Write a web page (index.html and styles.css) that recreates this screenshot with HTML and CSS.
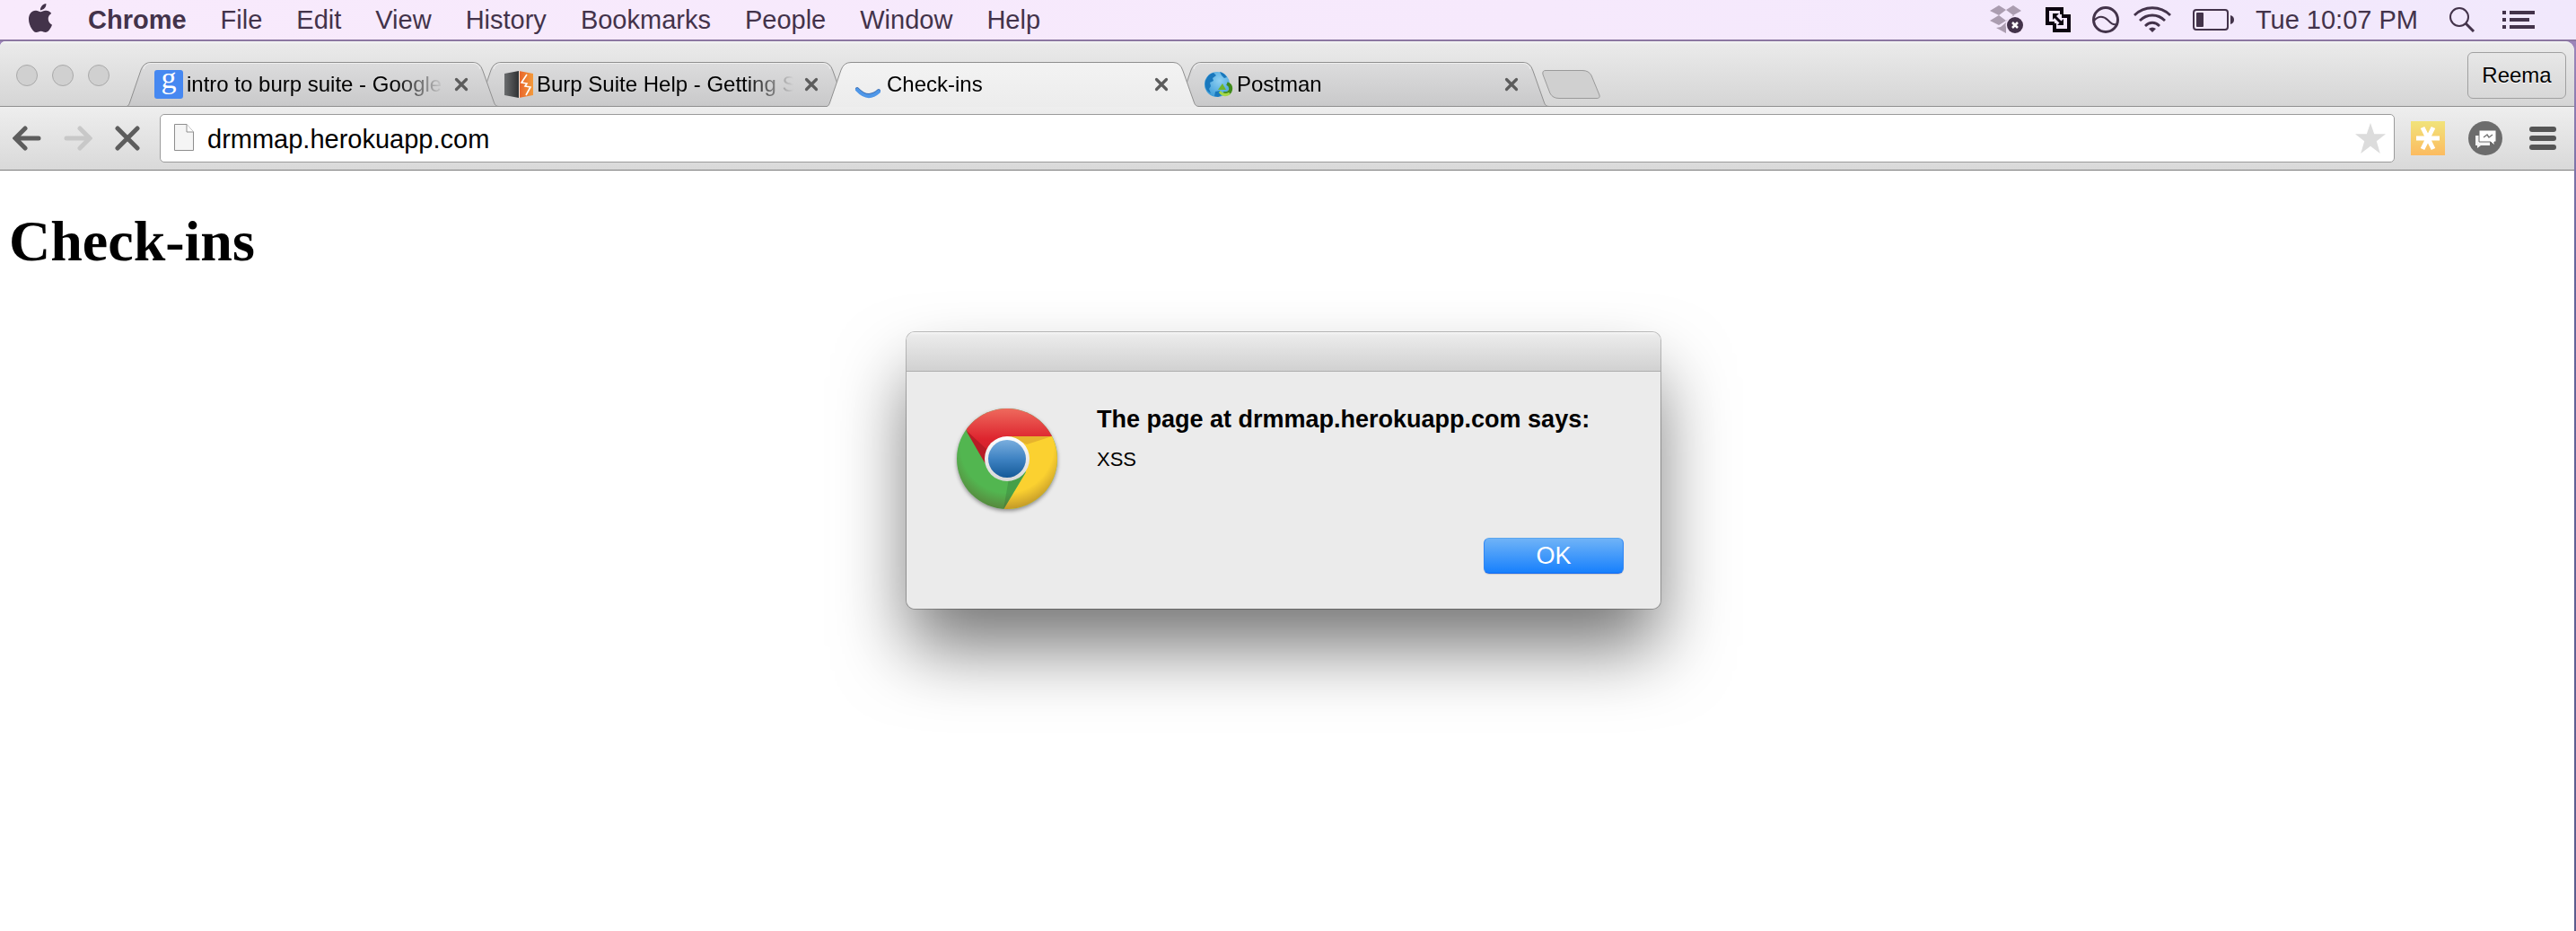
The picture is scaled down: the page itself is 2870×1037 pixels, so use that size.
FILE: index.html
```html
<!DOCTYPE html>
<html lang="en">
<head>
<meta charset="utf-8">
<title>Check-ins</title>
<link rel="stylesheet" href="styles.css">
</head>
<body>
<svg class="defs" width="0" height="0" aria-hidden="true">
  <defs>
    <linearGradient id="tab-idle" x1="0" y1="0" x2="0" y2="1"><stop offset="0" stop-color="#dcdcdd"/><stop offset="1" stop-color="#c9c9ca"/></linearGradient>
    <linearGradient id="tab-live" x1="0" y1="0" x2="0" y2="1"><stop offset="0" stop-color="#f3f3f3"/><stop offset="1" stop-color="#ececec"/></linearGradient>
    <symbol id="close" viewBox="0 0 16 16"><path d="M2.500 2.500l11 11M13.500 2.500l-11 11" stroke="#5c5c5c" stroke-width="3.200" stroke-linecap="round" fill="none"/></symbol>
  </defs>
</svg>

<header class="menubar">
  <nav class="menus" aria-label="Menu bar">
    <button class="menu apple" aria-label="Apple menu"><svg width="32" height="32" viewBox="0 0 24 24" fill="#43334a"><path d="M12.152 6.896c-.948 0-2.415-1.078-3.960-1.040-2.040.027-3.910 1.183-4.961 3.014-2.117 3.675-.546 9.103 1.519 12.090 1.013 1.454 2.208 3.090 3.792 3.039 1.520-.065 2.090-.987 3.935-.987 1.831 0 2.350.987 3.960.948 1.637-.026 2.676-1.480 3.676-2.948 1.156-1.688 1.636-3.325 1.662-3.415-.039-.013-3.182-1.221-3.220-4.857-.026-3.040 2.480-4.494 2.597-4.559-1.429-2.090-3.623-2.324-4.390-2.376-2-.156-3.675 1.090-4.610 1.090zM15.530 3.830c.843-1.012 1.400-2.427 1.245-3.830-1.207.052-2.662.805-3.532 1.818-.780.896-1.454 2.338-1.273 3.714 1.338.104 2.715-.688 3.559-1.701"/></svg></button>
    <button class="menu app">Chrome</button>
    <button class="menu">File</button>
    <button class="menu">Edit</button>
    <button class="menu">View</button>
    <button class="menu">History</button>
    <button class="menu">Bookmarks</button>
    <button class="menu">People</button>
    <button class="menu">Window</button>
    <button class="menu">Help</button>
  </nav>
  <div class="status">
    <svg width="38" height="32" viewBox="0 0 38 32"><g fill="#ab9db0"><path d="M10 0l8 5-8 6-10-5zM26 0l9 6-9 5-8-6zM0 17l10-6 8 6-8 5zM18 17l8-6 9 6-8 5zM7 25l5-1 6-5v12z"/></g><circle cx="28" cy="22" r="10.500" fill="#f5e8fb"/><circle cx="28" cy="22" r="9" fill="#43334a"/><path d="M25 19l6 6M31 19l-6 6" stroke="#fff" stroke-width="2.500"/></svg>
    <svg width="28" height="28" viewBox="0 0 28 28" fill="none" stroke="#0c0410" stroke-width="4"><path d="M10 18H2V2h16v6"/><path d="M18 10h8v16H10v-8"/><path d="M9 9l10 10" stroke-width="3"/><path d="M8 14V7h7zM20 13v7h-7z" fill="#0c0410" stroke="none"/></svg>
    <svg width="30" height="30" viewBox="0 0 30 30" fill="none" stroke="#43334a"><circle cx="15" cy="15" r="13.500" stroke-width="3"/><path d="M2 16c5-6 11-5 15-1s6 6 10 5" stroke-width="2"/></svg>
    <svg class="wifi" width="42" height="30" viewBox="0 0 42 30" fill="none" stroke="#43334a" stroke-width="2.800"><path d="M1 10C12-1 30-1 41 10M7 16c8-8 20-8 28 0M13 22c5-5 11-5 16 0"/><path d="M21 29l-4-4q4-3 8 0z" fill="#43334a" stroke="none"/></svg>
    <svg width="46" height="24" viewBox="0 0 46 24"><rect x="1" y="1" width="38" height="22" rx="3" fill="none" stroke="#43334a" stroke-width="2"/><rect x="4" y="4" width="8" height="16" rx="1" fill="#43334a"/><path d="M42 7q4 1 4 5t-4 5z" fill="#43334a"/></svg>
    <time class="clock">Tue 10:07 PM</time>
    <svg class="search" width="30" height="28" viewBox="0 0 30 28" fill="none" stroke="#43334a"><circle cx="12" cy="11" r="10" stroke-width="2"/><path d="M19 18l9 9" stroke-width="3"/></svg>
    <svg width="36" height="20" viewBox="0 0 36 20" fill="#43334a"><path d="M0 0h4v4H0zM8 0h28v4H8zM0 8h4v4H0zM8 8h22v4H8zM0 16h4v4H0zM8 16h28v4H8z"/></svg>
  </div>
</header>

<main class="window">
  <div class="tabstrip">
    <div class="lights"><button aria-label="Close window"></button><button aria-label="Minimise"></button><button aria-label="Zoom"></button></div>
    <ul class="tabs">
      <li class="tab first">
        <svg class="shape" width="415" height="50" viewBox="0 0 415 50"><path d="M0 49.500C2 49.500 3 47 4 44L16 9Q19 .5 27 .5H386Q394 .5 397 10L409 44C410 47 411 49.500 415 49.500Z" fill="url(#tab-idle)" stroke="#8f8f8f"/><path d="M19 8Q21 1.500 27 1.500H386Q392 1.500 394 8" fill="none" stroke="#efefef"/></svg>
        <div class="label"><span class="favicon google">g</span><a class="title" href="#search">intro to burp suite - Google Search</a><button class="close" aria-label="Close tab"><svg width="16" height="16"><use href="#close"/></svg></button></div>
      </li>
      <li class="tab second">
        <svg class="shape" width="415" height="50" viewBox="0 0 415 50"><path d="M0 49.500C2 49.500 3 47 4 44L16 9Q19 .5 27 .5H386Q394 .5 397 10L409 44C410 47 411 49.500 415 49.500Z" fill="url(#tab-idle)" stroke="#8f8f8f"/><path d="M19 8Q21 1.500 27 1.500H386Q392 1.500 394 8" fill="none" stroke="#efefef"/></svg>
        <div class="label"><svg class="favicon" width="32" height="32" viewBox="0 0 32 32"><defs><linearGradient id="burp-l"><stop offset="0" stop-color="#6a6c6e"/><stop offset="1" stop-color="#2f3133"/></linearGradient><linearGradient id="burp-r"><stop offset="0" stop-color="#e8632a"/><stop offset="1" stop-color="#f39a3b"/></linearGradient></defs><path d="M0 4L16 1v30L0 28z" fill="url(#burp-l)"/><path d="M16 1l16 3v24l-16 3z" fill="url(#burp-r)"/><path d="M16.500 1v30" stroke="#f1e4dc"/><path d="M25 5l-6 9 6 1-2 3 6 1-5 9" fill="none" stroke="#fff" stroke-width="1.600"/></svg><a class="title" href="#burp">Burp Suite Help - Getting Started</a><button class="close" aria-label="Close tab"><svg width="16" height="16"><use href="#close"/></svg></button></div>
      </li>
      <li class="tab active">
        <svg class="shape" width="415" height="50" viewBox="0 0 415 50"><path d="M0 49.500C2 49.500 3 47 4 44L16 9Q19 .5 27 .5H386Q394 .5 397 10L409 44C410 47 411 49.500 415 49.500V50H0Z" fill="url(#tab-live)"/><path d="M0 49.500C2 49.500 3 47 4 44L16 9Q19 .5 27 .5H386Q394 .5 397 10L409 44C410 47 411 49.500 415 49.500" fill="none" stroke="#8f8f8f"/></svg>
        <div class="label"><svg class="favicon" width="32" height="32" viewBox="0 0 32 32"><path d="M3 21Q15 34 27 23" fill="none" stroke="#3b6fb5" stroke-width="4" stroke-linecap="round"/><path d="M3 22Q15 35 27 24" fill="none" stroke="#4f97e8" stroke-width="4" stroke-linecap="round"/></svg><a class="title" href="#checkins">Check-ins</a><button class="close" aria-label="Close tab"><svg width="16" height="16"><use href="#close"/></svg></button></div>
      </li>
      <li class="tab fourth">
        <svg class="shape" width="415" height="50" viewBox="0 0 415 50"><path d="M0 49.500C2 49.500 3 47 4 44L16 9Q19 .5 27 .5H386Q394 .5 397 10L409 44C410 47 411 49.500 415 49.500Z" fill="url(#tab-idle)" stroke="#8f8f8f"/><path d="M19 8Q21 1.500 27 1.500H386Q392 1.500 394 8" fill="none" stroke="#efefef"/></svg>
        <div class="label"><svg class="favicon" width="32" height="32" viewBox="0 0 32 32"><defs><radialGradient id="globe" cx=".6" cy=".35" r=".7"><stop offset="0" stop-color="#8fd0f2"/><stop offset="1" stop-color="#3a9bd8"/></radialGradient></defs><circle cx="14" cy="16" r="14" fill="url(#globe)"/><path d="M1 12Q4 4 10 3l3 3-4 3 1 3-4 2 1 4-2 3 2 5Q-1 22 1 12zM17 2q5 1 8 6l-3 1-3-3zM12 24l5-1 2 5-4 2-4-1z" fill="#1a78bd"/><path d="M25 15q5 2 4 7t-8 4" fill="none" stroke="#3f8a1c" stroke-width="4"/><path d="M17 24q4 6 11 2" fill="none" stroke="#a5d848" stroke-width="3"/><path d="M15 22l5-7 4 7z" fill="#6fb52c"/></svg><a class="title" href="#postman">Postman</a><button class="close" aria-label="Close tab"><svg width="16" height="16"><use href="#close"/></svg></button></div>
      </li>
    </ul>
    <button class="newtab" aria-label="New tab"><svg width="66" height="34" viewBox="0 0 66 34"><path d="M4 1.500H45Q52 1.500 55 7L64 29Q65 32.500 61 32.500H19Q12 32.500 9 27L1 6Q0 1.500 4 1.500Z" fill="#d0d0d0" stroke="#9a9a9a"/></svg></button>
    <button class="person">Reema</button>
  </div>

  <div class="toolbar">
    <div class="nav">
      <button aria-label="Back"><svg width="32" height="28" viewBox="0 0 32 28" fill="none" stroke="#5d5d5d" stroke-width="5" stroke-linecap="round"><path d="M14 3L3 14l11 11M4 14h25"/></svg></button>
      <button aria-label="Forward"><svg width="32" height="28" viewBox="0 0 32 28" fill="none" stroke="#c8c8c8" stroke-width="5" stroke-linecap="round"><path d="M18 3l11 11-11 11M28 14H3"/></svg></button>
      <button aria-label="Stop"><svg width="28" height="28" viewBox="0 0 28 28" fill="none" stroke="#5d5d5d" stroke-width="5" stroke-linecap="round"><path d="M3 3l22 22M25 3L3 25"/></svg></button>
    </div>
    <form class="omnibox">
      <svg width="22" height="31" viewBox="0 0 22 31"><path d="M.5.5H14L21.500 9V29.500H.5z" fill="#f5f5f5" stroke="#8e8e8e"/><path d="M14 .5V9h7.500" fill="#fff" stroke="#8e8e8e"/></svg>
      <input type="text" aria-label="Address" value="drmmap.herokuapp.com">
      <button type="button" aria-label="Bookmark this page"><svg width="34" height="34" viewBox="0 0 34 34"><path d="M17 0l4.200 12.300H34L23.800 20.300 27.800 34 17 25.800 6.200 34l4-13.700L0 12.300h12.800z" fill="#dcdcdc"/></svg></button>
    </form>
    <div class="extensions">
      <button aria-label="Asterisk extension"><svg width="38" height="38" viewBox="0 0 38 38"><defs><linearGradient id="sun" x1="0" y1="0" x2="0" y2="1"><stop offset="0" stop-color="#f1e37a"/><stop offset="1" stop-color="#fcbb60"/></linearGradient></defs><path d="M0 0h38v38H0z" fill="url(#sun)"/><path d="M6 19h26M13 7l12 24M25 7L13 31" stroke="#fff" stroke-width="5"/></svg></button>
      <button aria-label="Chat extension"><svg width="38" height="38" viewBox="0 0 38 38"><circle cx="19" cy="19" r="19" fill="#6c6c6c"/><path d="M8 16h16v11H14l-4 3v-3H8z" fill="#f3f3f3"/><path d="M12 10h19v13h-2v4l-4-4H12z" fill="#fff" stroke="#6c6c6c"/><path d="M17 18l4-3 2 3 4-3" fill="none" stroke="#777" stroke-width="1.500"/></svg></button>
      <button aria-label="Chrome menu"><svg width="30" height="26" viewBox="0 0 30 26" fill="#555"><rect width="30" height="6" rx="3"/><rect y="10" width="30" height="6" rx="3"/><rect y="20" width="30" height="6" rx="3"/></svg></button>
    </div>
  </div>

  <section class="page">
    <h1>Check-ins</h1>
    <div class="overlay">
      <div class="alert" role="alertdialog" aria-labelledby="alert-title" aria-describedby="alert-text">
        <div class="alert-bar"></div>
        <div class="alert-body">
          <svg class="logo" width="112" height="120" viewBox="0 0 112 120">
            <defs>
              <clipPath id="disc"><circle cx="56" cy="56" r="56"/></clipPath>
              <linearGradient id="red" x1="0" y1="0" x2="0" y2="1"><stop offset="0" stop-color="#ee6a5d"/><stop offset=".55" stop-color="#dd242e"/><stop offset="1" stop-color="#c81f28"/></linearGradient>
              <linearGradient id="blue" x1="0" y1="0" x2="0" y2="1"><stop offset="0" stop-color="#7aaede"/><stop offset=".5" stop-color="#3f83c3"/><stop offset="1" stop-color="#155a98"/></linearGradient>
              <radialGradient id="rim" gradientUnits="userSpaceOnUse" cx="56" cy="42" r="72"><stop offset=".72" stop-color="#6b3a20" stop-opacity="0"/><stop offset="1" stop-color="#5a3418" stop-opacity=".4"/></radialGradient>
              <linearGradient id="ring" x1="0" y1="0" x2="0" y2="1"><stop offset="0" stop-color="#fff"/><stop offset="1" stop-color="#d8d8d8"/></linearGradient>
            </defs>
            <g clip-path="url(#disc)">
              <path d="M0 0h112v112H0z" fill="#52b650"/>
              <path d="M56 31h60v90H47l30-50z" fill="#fbd130"/>
              <path d="M56 31h50L78 40z" fill="#e6b32e"/>
              <path d="M76 72L52 112l6-34z" fill="#469f48"/>
              <path d="M-5 0h120v31H56L34 62 5 14z" fill="url(#red)"/>
              <path d="M10 24l22 38 4-14z" fill="#b81c25"/>
              <circle cx="56" cy="56" r="56" fill="url(#rim)"/>
            </g>
            <circle cx="56" cy="56" r="25" fill="url(#ring)"/>
            <circle cx="56" cy="56" r="21" fill="url(#blue)"/>
          </svg>
          <div class="alert-copy">
            <h2 id="alert-title">The page at drmmap.herokuapp.com says:</h2>
            <p id="alert-text">XSS</p>
          </div>
          <button class="ok">OK</button>
        </div>
      </div>
    </div>
  </section>
</main>
</body>
</html>
```
FILE: styles.css
```css
* { box-sizing: border-box; }

body {
  margin: 0;
  min-height: 100vh;
  display: flex;
  flex-direction: column;
  background: linear-gradient(#a68bbf, #65659b 300px, #5c5c8c);
  font-family: "Liberation Sans", Arial, sans-serif;
  color: #000;
}

button {
  margin: 0;
  padding: 0;
  border: 0;
  background: none;
  font: inherit;
  color: inherit;
}

svg { display: block; flex: none; }
.defs { position: absolute; }

/* System menu bar */
.menubar {
  display: flex;
  justify-content: space-between;
  height: 46px;
  padding: 0 46px 0 29px;
  border-bottom: 2px solid #8c78a2;
  background: linear-gradient(90deg, #f8eafc, #f6e9fc 60%, #f1e8fc);
  color: #43334a;
  font-size: 29px;
  line-height: 44px;
}
.menus { display: flex; gap: 38px; }
.apple { padding-top: 4px; margin-right: -1px; }
.app { font-weight: bold; }
.menu { display: flex; }
.status { display: flex; align-items: center; gap: 24px; }
.wifi { margin-left: -8px; }
.clock { margin-right: 10px; }
.search { margin-right: 6px; }

/* Browser window */
.window {
  flex: 1;
  display: flex;
  flex-direction: column;
  margin-right: 2px;
  border-radius: 6px 10px 0 0;
  background: #fff;
  overflow: hidden;
}
.tabstrip {
  display: flex;
  align-items: flex-end;
  height: 73px;
  padding: 0 9px 0 18px;
  background: linear-gradient(#f6f6f6, #eaeaea 3px, #d5d5d5);
  box-shadow: inset 0 -1px #8f8f8f;
}
.lights { display: flex; gap: 16px; margin-bottom: 23px; }
.lights button {
  width: 24px;
  height: 24px;
  border: 1px solid #a9a9a9;
  border-radius: 50%;
  background: #d0d0d0;
}
.tabs {
  display: flex;
  margin: 0 0 0 19px;
  padding: 0;
  list-style: none;
}
.tab {
  position: relative;
  display: grid;
  grid-template-columns: 100%;
  width: 415px;
  height: 50px;
  margin-right: -25px;
}
.shape, .label { grid-area: 1 / 1; }
.first { z-index: 3; }
.second { z-index: 2; }
.active { z-index: 4; }
.fourth { z-index: 1; }
.label {
  display: flex;
  align-items: center;
  padding: 0 34px 0 31px;
  font-size: 24px;
  line-height: 32px;
}
.favicon { flex: none; margin-right: 4px; }
.google {
  width: 32px;
  height: 32px;
  border-radius: 3px;
  background: #4688f1;
  color: #fff;
  font: 34px/18px "Liberation Serif", serif;
  text-align: center;
}
.title {
  flex: 1;
  min-width: 0;
  overflow: hidden;
  white-space: nowrap;
  color: #000;
  text-decoration: none;
  -webkit-mask-image: linear-gradient(90deg, #000 calc(100% - 54px), transparent);
  mask-image: linear-gradient(90deg, #000 calc(100% - 54px), transparent);
}
.close { margin-left: 12px; }
.newtab { margin: 0 auto 8px 17px; }
.person {
  width: 110px;
  height: 52px;
  margin-bottom: 9px;
  border: 1px solid #a0a0a0;
  border-radius: 6px;
  font-size: 24px;
  text-shadow: 0 1px #fff;
}

.toolbar {
  display: flex;
  align-items: center;
  height: 71px;
  padding: 0 20px 1px 14px;
  border-bottom: 1px solid #7d7d7d;
  background: linear-gradient(#eeeeee, #d9d9d9);
}
.nav { display: flex; gap: 25px; }
.omnibox {
  flex: 1;
  display: flex;
  align-items: center;
  height: 54px;
  margin: 0 18px 0 22px;
  padding: 0 9px 0 15px;
  border: 1px solid #9b9b9b;
  border-radius: 5px;
  background: #fff;
}
.omnibox input {
  flex: 1;
  min-width: 0;
  padding: 2px 0 0 15px;
  border: 0;
  outline: 0;
  background: none;
  font: 29px/34px "Liberation Sans", Arial, sans-serif;
  color: #000;
}
.extensions { display: flex; align-items: center; gap: 26px; }
.extensions button:last-child { margin-left: 4px; }

/* Page content */
.page {
  position: relative;
  flex: 1;
  padding: 42px 10px 0;
}
h1 {
  margin: 0;
  font: bold 64px/74px "Liberation Serif", "Times New Roman", serif;
}
.overlay {
  position: absolute;
  inset: 0;
  display: flex;
  justify-content: center;
  align-items: flex-start;
  padding: 179px 8px 0 0;
}
.alert {
  width: 842px;
  border: 1px solid rgba(0, 0, 0, 0.25);
  border-radius: 10px;
  background: #ebebeb;
  background-clip: padding-box;
  box-shadow: 0 46px 80px -4px rgba(0, 0, 0, 0.54);
}
.alert-bar {
  height: 44px;
  border-bottom: 1px solid #adadad;
  border-radius: 9px 9px 0 0;
  background: linear-gradient(#f8f8f8, #ebebeb 3px, #d1d1d1);
}
.alert-body {
  display: grid;
  grid-template-columns: 112px 1fr;
  column-gap: 44px;
  padding: 41px 41px 39px 56px;
}
.logo { filter: drop-shadow(0 2px 2px rgba(0, 0, 0, 0.4)); }
.alert-copy h2 {
  margin: 0 0 20px;
  font-size: 27px;
  line-height: 24px;
}
.alert-copy p {
  margin: 0;
  font-size: 22px;
  line-height: 26px;
}
.ok {
  grid-column: 2;
  justify-self: end;
  width: 156px;
  height: 40px;
  margin-top: 24px;
  border: 1px solid;
  border-color: #5ba5ee #2f86f5 #1568f0;
  border-radius: 6px;
  background: linear-gradient(#6fb3f7, #1780fd);
  box-shadow: 0 1px 1px rgba(0, 0, 0, 0.15);
  color: #fff;
  font-size: 27px;
  line-height: 38px;
}
```
